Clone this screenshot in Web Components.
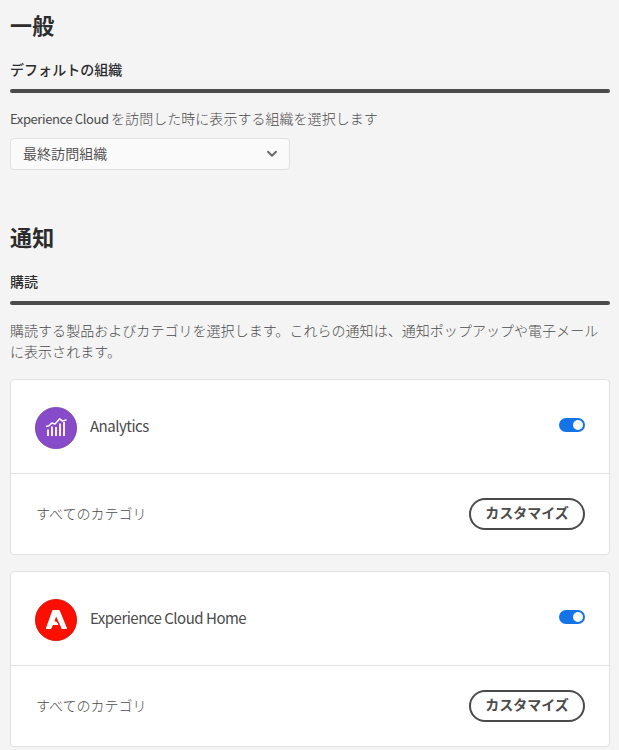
<!DOCTYPE html>
<html lang="ja">
<head>
<meta charset="utf-8">
<title>環境設定</title>
<style>
html{background:#f4f4f4}
body{margin:0;background:#f4f4f4;color:#4b4b4b;font-family:"Noto Sans CJK JP","Noto Sans",sans-serif;font-size:14px;line-height:21px}
</style>
</head>
<body>
<preferences-page></preferences-page>
<script>
function define(name, html) {
  const template = document.createElement('template');
  template.innerHTML = html;
  customElements.define(name, class extends HTMLElement {
    constructor() {
      super();
      this.attachShadow({mode: 'open'}).append(template.content.cloneNode(true));
    }
  });
}

define('section-title', `<style>
:host{display:block}
h1{margin:0;font-size:22px;line-height:30px;font-weight:700;color:#2c2c2c;letter-spacing:.2px}
</style><h1><slot></slot></h1>`);

define('section-subtitle', `<style>
:host{display:block}
h2{margin:0;font-size:14px;line-height:20px;font-weight:500;color:#2c2c2c;letter-spacing:.05px}
div{height:4px;border-radius:2px;background:#4b4b4b;margin-top:10px}
</style><h2><slot></slot></h2><div></div>`);

define('select-box', `<style>
:host{display:flex;box-sizing:border-box;width:280px;height:32px;border:1px solid #e1e1e1;border-radius:4px;background:#fafafa;align-items:center;justify-content:space-between;padding:0 11px 0 12px}
span{font-weight:350;padding-bottom:2px;letter-spacing:.05px}
svg{display:block}
</style><span><slot></slot></span>
<svg width="12" height="8" viewBox="0 0 12 8" fill="none" stroke="#6e6e6e" stroke-width="2" stroke-linecap="round" stroke-linejoin="round"><path d="M2 1.8 6 5.8 10 1.8"/></svg>`);

define('toggle-switch', `<style>
:host{display:flex;box-sizing:border-box;width:26px;height:14px;border-radius:7px;background:#1473e6;padding:2px;justify-content:flex-end}
i{width:10px;height:10px;border-radius:50%;background:#fafafa}
</style><i></i>`);

define('pill-button', `<style>
:host{display:block}
button{display:block;box-sizing:border-box;width:116px;height:32px;margin:0;padding:0 0 4px;border:2px solid #4b4b4b;border-radius:16px;background:transparent;color:#4b4b4b;font:700 14px/24px "Noto Sans CJK JP",sans-serif;white-space:nowrap}
</style><button><slot></slot></button>`);

define('analytics-icon', `<style>:host,svg{display:block}</style>
<svg width="42" height="42" viewBox="0 0 42 42"><circle cx="21" cy="21" r="20.6" fill="#874bc9" stroke="#7340ac" stroke-width=".8"/>
<path d="M13 29v-6.5M17 29v-9.5M21 29v-9M25 29V16.5M29 29V15" stroke="#fff" stroke-width="1.8" fill="none"/>
<path d="M11 19.4l3-.6 2.8-2.8 3.2 1 4.7-5.2 2.8 2.3 4-1.4" fill="none" stroke="#fff" stroke-width="1.5" stroke-linejoin="round"/></svg>`);

define('adobe-icon', `<style>:host,svg{display:block}</style>
<svg width="42" height="42" viewBox="0 0 42 42"><circle cx="21" cy="21" r="20.6" fill="#fa0f00" stroke="#d50d00" stroke-width=".8"/>
<path fill-rule="evenodd" d="M18 11h6q.5 0 .7.5L32 29.3q.2.7-.5.7h-4.3q-.5 0-.7-.5L25 26h-7.1l-1.6 3.5q-.2.5-.7.5h-4.2q-.7 0-.5-.7l6.4-17.8q.2-.5.7-.5zM21.1 17.5l-1.6 4.8q2.4.2 3.2 2l.7 1.7H25z" fill="#fff"/></svg>`);

define('product-card', `<style>
:host{display:block;box-sizing:border-box;height:176px;border:1px solid #e1e1e1;border-radius:4px;background:#fff}
.head{display:flex;box-sizing:border-box;height:94px;padding:0 24px;border-bottom:1px solid #e1e1e1;align-items:center}
.icon{margin:3px 13px 0 0}
.name{flex:1;font-size:15px;line-height:22px;letter-spacing:-.5px;padding-bottom:2px}
toggle-switch{margin-bottom:3px}
.body{display:flex;height:80px;padding:0 24px 0 25px;align-items:center;justify-content:space-between}
.body span{font-weight:300;padding-bottom:2px}
</style>
<div class="head"><div class="icon"><slot name="icon"></slot></div><div class="name"><slot></slot></div><toggle-switch></toggle-switch></div>
<div class="body"><span>すべてのカテゴリ</span><pill-button>カスタマイズ</pill-button></div>`);

define('preferences-page', `<style>
:host{display:block;box-sizing:border-box;height:750px;padding:9px 9px 0 10px}
section-subtitle{margin-top:20px}
.label{margin:15px 0 9px}
.label span{font-size:13px;font-weight:400;letter-spacing:-.4px}
.second{margin-top:51px}
.desc{margin:15px 0 17px}
p{margin:0;font-weight:300;letter-spacing:.04px}
.cards{display:grid;gap:16px}
</style>
<section-title>一般</section-title>
<section-subtitle>デフォルトの組織</section-subtitle>
<p class="label"><span>Experience Cloud </span>を訪問した時に表示する組織を選択します</p>
<select-box>最終訪問組織</select-box>
<section-title class="second">通知</section-title>
<section-subtitle>購読</section-subtitle>
<p class="desc">購読する製品およびカテゴリを選択します。これらの通知は、通知ポップアップや電子メールに表示されます。</p>
<div class="cards">
<product-card><analytics-icon slot="icon"></analytics-icon>Analytics</product-card>
<product-card><adobe-icon slot="icon"></adobe-icon>Experience Cloud Home</product-card>
</div>`);
</script>
</body>
</html>
